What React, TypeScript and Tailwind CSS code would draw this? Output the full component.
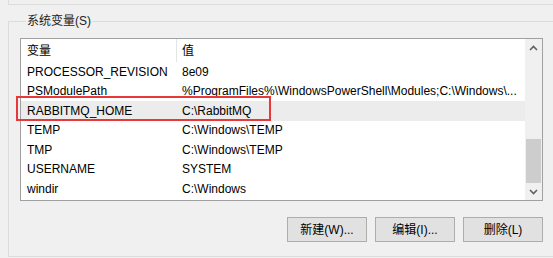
const rows = [
  { name: "PROCESSOR_REVISION", value: "8e09" },
  { name: "PSModulePath", value: "%ProgramFiles%\\WindowsPowerShell\\Modules;C:\\Windows\\..." },
  { name: "RABBITMQ_HOME", value: "C:\\RabbitMQ", selected: true },
  { name: "TEMP", value: "C:\\Windows\\TEMP" },
  { name: "TMP", value: "C:\\Windows\\TEMP" },
  { name: "USERNAME", value: "SYSTEM" },
  { name: "windir", value: "C:\\Windows" },
];

function Chevron({ up }: { up?: boolean }) {
  return (
    <svg width="9" height="6" viewBox="0 0 9 6">
      <path
        d={up ? "M1 5 L4.5 1.5 L8 5" : "M1 1 L4.5 4.5 L8 1"}
        fill="none"
        stroke="#606060"
        strokeWidth="1.6"
      />
    </svg>
  );
}

export default function App() {
  return (
    <div
      className="relative h-[258px] w-[553px] overflow-hidden bg-[#f0f0f0] text-[12px] text-black"
      style={{ fontFamily: '"Liberation Sans", "Noto Sans CJK SC", sans-serif' }}
    >
      <div className="ml-[8px] h-[5px] border-b border-l border-[#dcdcdc]" />

      <fieldset className="ml-[8px] mt-[8px] h-[244px] w-[560px] border border-[#dcdcdc] pl-[11px]">
        <legend className="ml-[6px] px-[1px] leading-[16px] text-[#222]">系统变量(S)</legend>

        <div className="mt-[9px] flex h-[163px] w-[523px] border border-[#a0a0a0] bg-white">
          <div className="flex w-[504px] flex-col">
            <div className="flex h-[23px] items-center">
              <div className="flex h-full w-[156px] items-center border-r border-[#e5e5e5] pl-[6px]">变量</div>
              <div className="pl-[5px]">值</div>
            </div>
            {rows.map((r) => (
              <div
                key={r.name}
                className={`flex h-[19.5px] items-center ${r.selected ? "bg-[#ececec]" : ""}`}
              >
                <div className="w-[156px] overflow-hidden whitespace-nowrap pl-[6px]">{r.name}</div>
                <div className="w-[348px] overflow-hidden whitespace-nowrap pl-[5px]">{r.value}</div>
              </div>
            ))}
          </div>
          <div className="flex w-[17px] flex-col bg-[#f0f0f0]">
            <div className="flex h-[17px] items-center justify-center">
              <Chevron up />
            </div>
            <div className="flex-1" />
            <div className="mx-auto h-[44px] w-[15px] bg-[#cdcdcd]" />
            <div className="flex h-[17px] items-center justify-center">
              <Chevron />
            </div>
          </div>
        </div>

        <div className="mt-[16px] flex w-[523px] justify-end gap-[8px]">
          {["新建(W)...", "编辑(I)...", "删除(L)"].map((b) => (
            <button
              key={b}
              className="h-[25px] w-[80px] border border-[#adadad] bg-[#e1e1e1] text-[12px]"
            >
              {b}
            </button>
          ))}
        </div>
      </fieldset>

      <div className="absolute left-[16px] top-[96px] h-[25px] w-[255px] border-2 border-[#e8383a]" />
    </div>
  );
}
